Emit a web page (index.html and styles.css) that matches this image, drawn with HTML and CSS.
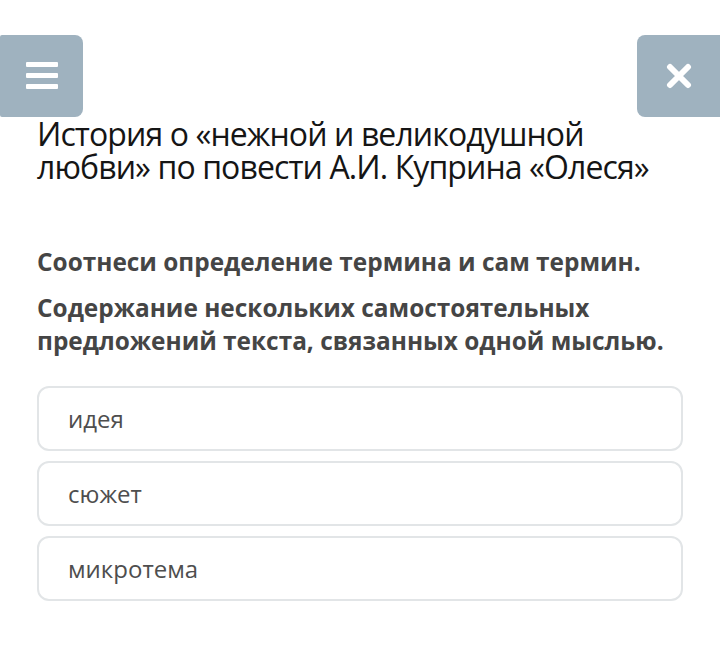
FILE: index.html
```html
<!DOCTYPE html>
<html lang="ru">
<head>
<meta charset="utf-8">
<link rel="stylesheet" href="styles.css">
</head>
<body>
<div class="page">
  <div class="topbar">
    <button class="btn btn-menu" aria-label="menu">
      <svg width="32" height="28" viewBox="0 0 32 28"><rect x="0" y="0" width="32" height="5" rx="1" fill="#fff"/><rect x="0" y="11" width="32" height="5" rx="1" fill="#fff"/><rect x="0" y="22" width="32" height="5" rx="1" fill="#fff"/></svg>
    </button>
    <button class="btn btn-close" aria-label="close">
      <svg width="26" height="26" viewBox="0 0 26 26"><path d="M4 4 L22 22 M22 4 L4 22" stroke="#fff" stroke-width="6" stroke-linecap="round"/></svg>
    </button>
  </div>
  <h1 class="title">История о «нежной и великодушной любви» по повести А.И. Куприна «Олеся»</h1>
  <p class="question q1">Соотнеси определение термина и сам термин.</p>
  <p class="question q2">Содержание нескольких самостоятельных предложений текста, связанных одной мыслью.</p>
  <div class="options">
    <div class="option">идея</div>
    <div class="option">сюжет</div>
    <div class="option">микротема</div>
  </div>
</div>
</body>
</html>
```
FILE: styles.css
```css
html, body { margin: 0; padding: 0; background: #fff; }
body { font-family: "Open Sans", "Noto Sans", sans-serif; width: 720px; height: 655px; overflow: hidden; }
.page { padding: 35px 0 0 0; }
.topbar { display: flex; justify-content: space-between; height: 82px; }
.btn { border: 0; padding: 0; background: #9fb2bf; height: 82px; display: flex; align-items: center; justify-content: center; }
.btn-menu { width: 83px; border-radius: 2px 8px 8px 2px; }
.btn-close { width: 83px; border-radius: 8px 0 0 8px; }
.title { margin: 0 37px; max-width: 630px; font-weight: 400; font-size: 32px; line-height: 33px; color: #151515; letter-spacing: -0.9px; }
.question { margin: 0 37px; font-weight: 700; font-size: 24.4px; line-height: 33px; color: #454545; }
.q1 { margin-top: 62px; }
.q2 { margin-top: 13px; }
.options { margin: 29px 37px 0; display: flex; flex-direction: column; gap: 10px; }
.option { height: 61px; border: 2px solid #e2e5e7; border-radius: 12px; display: flex; align-items: center; padding-left: 29px; font-size: 24px; color: #4e4e4e; }
```
